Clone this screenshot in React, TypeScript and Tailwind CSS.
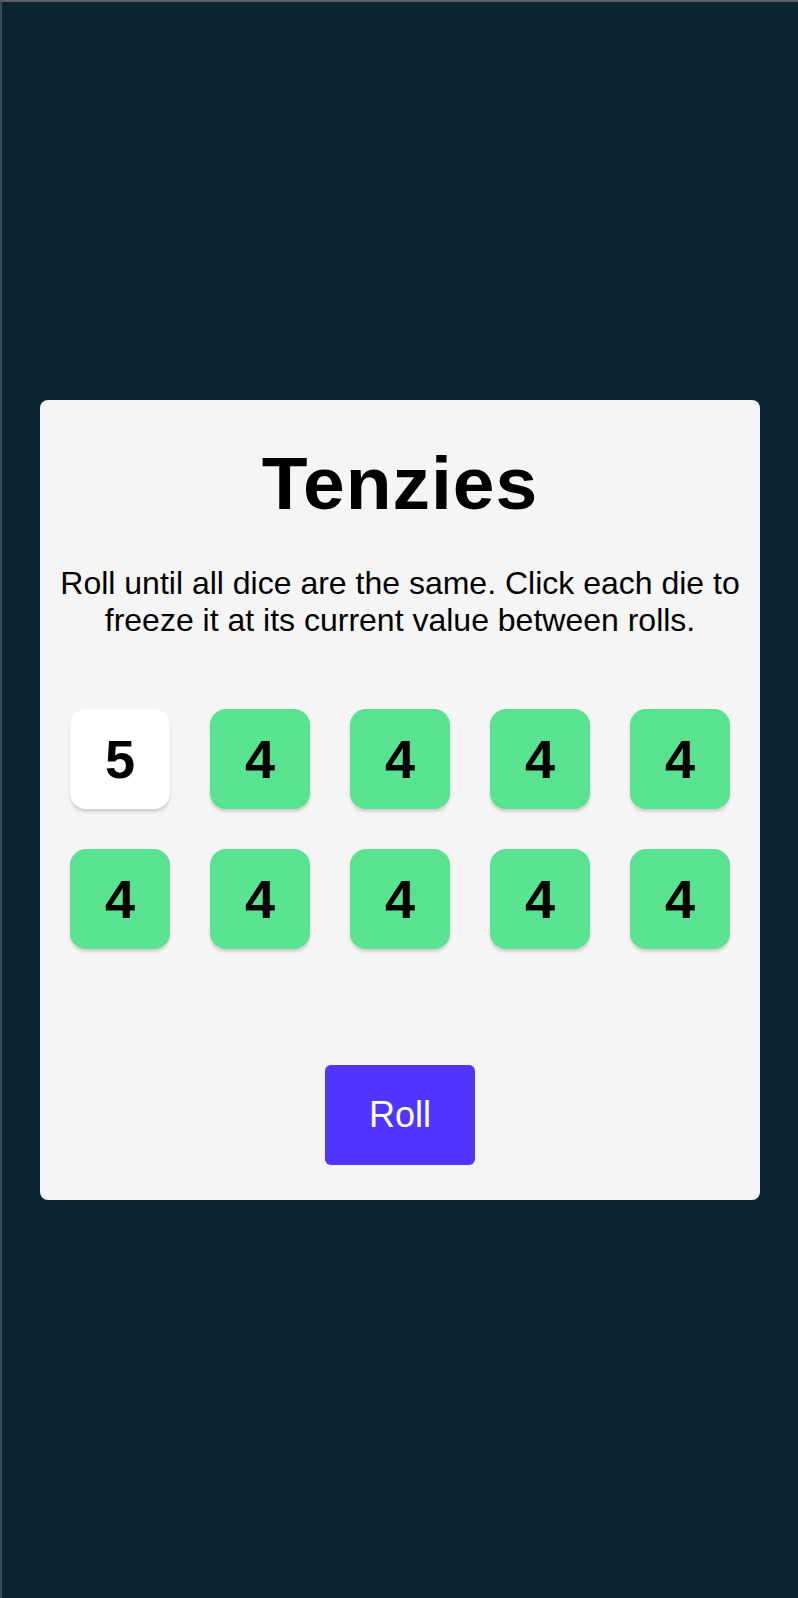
import * as React from "react";

type Die = { value: number; isHeld: boolean };

const initialDice: Die[] = [
  { value: 5, isHeld: false },
  { value: 4, isHeld: true },
  { value: 4, isHeld: true },
  { value: 4, isHeld: true },
  { value: 4, isHeld: true },
  { value: 4, isHeld: true },
  { value: 4, isHeld: true },
  { value: 4, isHeld: true },
  { value: 4, isHeld: true },
  { value: 4, isHeld: true },
];

function DieButton({ die, onHold }: { die: Die; onHold: () => void }) {
  return (
    <button
      type="button"
      onClick={onHold}
      className={
        "flex h-[100px] w-[100px] items-center justify-center rounded-[16px] text-[54px] font-bold leading-none text-black shadow-[0_3px_3px_rgba(0,0,0,0.15)] cursor-pointer " +
        (die.isHeld ? "bg-[#59E391]" : "bg-white")
      }
    >
      {die.value}
    </button>
  );
}

export default function App() {
  const [dice, setDice] = React.useState<Die[]>(initialDice);

  const holdDie = (index: number) => {
    setDice((prev) =>
      prev.map((d, i) => (i === index ? { ...d, isHeld: !d.isHeld } : d)),
    );
  };

  const rollDice = () => {
    setDice((prev) =>
      prev.map((d) =>
        d.isHeld ? d : { ...d, value: Math.ceil(Math.random() * 6) },
      ),
    );
  };

  return (
    <div className="flex h-[1598px] w-full items-center justify-center border-l-2 border-t-2 border-l-[#3c4c58] border-t-[#606060] bg-[#0B2434] font-['Liberation_Sans',Arial,sans-serif]">
      <main className="flex h-[800px] w-[720px] flex-col items-center rounded-[8px] bg-[#F5F5F5] px-[30px] pt-[41px]">
        <h1 className="text-[75px] font-bold leading-[84px] tracking-[1px] text-black">
          Tenzies
        </h1>
        <p className="-mx-[20px] mt-[40px] text-center text-[32px] leading-[37px] text-black">
          Roll until all dice are the same. Click each die to freeze it at its
          current value between rolls.
        </p>
        <div className="mt-[70px] grid grid-cols-5 gap-[40px]">
          {dice.map((die, i) => (
            <DieButton key={i} die={die} onHold={() => holdDie(i)} />
          ))}
        </div>
        <button
          type="button"
          onClick={rollDice}
          className="mt-[116px] h-[100px] w-[150px] rounded-[6px] bg-[#5035FF] text-[36px] text-white cursor-pointer"
        >
          Roll
        </button>
      </main>
    </div>
  );
}
